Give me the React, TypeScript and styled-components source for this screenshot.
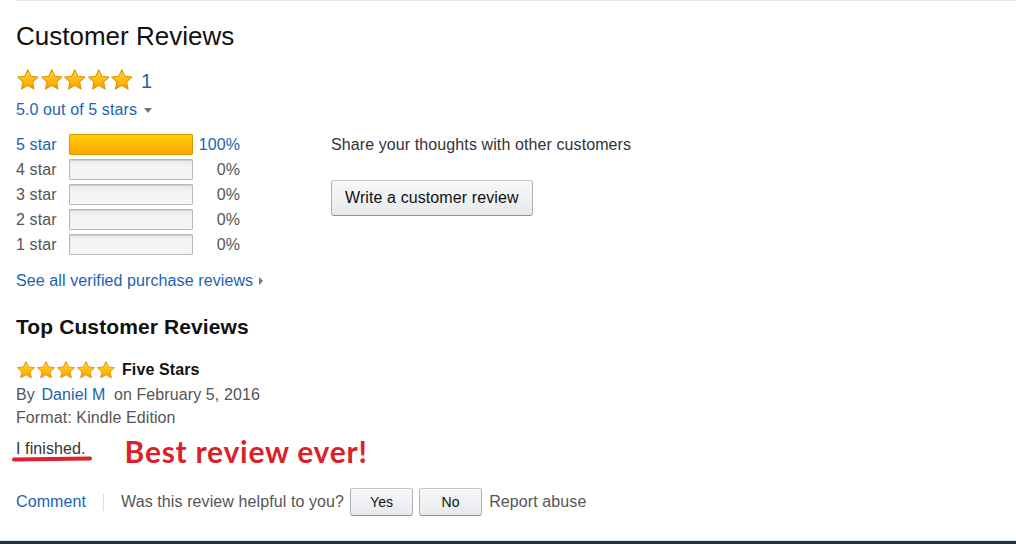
import React, { useId } from "react";
import styled, { createGlobalStyle } from "styled-components";

const Global = createGlobalStyle`
  html, body { margin: 0; padding: 0; background: #fff; }
  body { font-family: Arial, "Liberation Sans", sans-serif; color: #111; }
`;

const LINK = "#1a63b2";

const Page = styled.div`
  height: 544px;
  display: flex;
  flex-direction: column;
  overflow: hidden;
  background: #fff;
`;

const Content = styled.div`
  padding-left: 16px;
  display: flex;
  flex-direction: column;
  align-items: flex-start;
  letter-spacing: 0.1px;
`;

const TopRule = styled.div`
  align-self: stretch;
  height: 1px;
  background: #e7e7e7;
`;

const Heading = styled.h2`
  margin: 19px 0 0;
  font-size: 26px;
  line-height: 32px;
  font-weight: 400;
  letter-spacing: 0;
  color: #111;
`;

const StarsRow = styled.div<{ $mt: number; $h: number }>`
  margin-top: ${(p) => p.$mt}px;
  height: ${(p) => p.$h}px;
  display: flex;
  align-items: center;
`;

const StarSvg = styled.svg<{ $size: number }>`
  width: ${(p) => p.$size}px;
  height: ${(p) => p.$size}px;
  flex: none;
  display: block;
`;

const CountLink = styled.a`
  margin-left: 7px;
  margin-top: 2px;
  font-size: 20px;
  line-height: 24px;
  color: ${LINK};
  text-decoration: none;
`;

const RatingText = styled.div`
  margin-top: 8px;
  font-size: 16px;
  line-height: 20px;
  color: ${LINK};
  display: flex;
  align-items: center;
`;

const CaretDown = styled.span`
  display: inline-block;
  margin-left: 7px;
  width: 0;
  height: 0;
  border-left: 4.5px solid transparent;
  border-right: 4.5px solid transparent;
  border-top: 5px solid #777;
`;

const Summary = styled.div`
  margin-top: 12px;
  display: flex;
  align-items: flex-start;
`;

const Histogram = styled.div`
  width: 224px;
  display: flex;
  flex-direction: column;
`;

const HistRow = styled.div`
  height: 25px;
  display: flex;
  align-items: center;
  font-size: 16px;
`;

const StarLabel = styled.span<{ $active: boolean }>`
  width: 53px;
  color: ${(p) => (p.$active ? LINK : "#555")};
`;

const Bar = styled.div<{ $fill: number }>`
  width: 124px;
  height: 21px;
  box-sizing: border-box;
  border-radius: 1px;
  border: 1px solid ${(p) => (p.$fill > 0 ? "#d39b00" : "#b8b8b8")};
  background: ${(p) =>
    p.$fill > 0
      ? "linear-gradient(to bottom, #ffd000 0%, #ffb600 60%, #ffa600 100%)"
      : "linear-gradient(to bottom, #e9e9e9 0%, #f3f3f3 30%, #f5f5f5 100%)"};
  box-shadow: ${(p) =>
    p.$fill > 0 ? "none" : "inset 0 1px 1px rgba(0,0,0,0.12)"};
`;

const Percent = styled.span<{ $active: boolean }>`
  flex: 1;
  text-align: right;
  color: ${(p) => (p.$active ? LINK : "#555")};
`;

const ShareCol = styled.div`
  margin-left: 91px;
  display: flex;
  flex-direction: column;
  align-items: flex-start;
`;

const ShareText = styled.div`
  font-size: 16px;
  line-height: 25px;
  color: #333;
`;

const Button = styled.button<{ $h: number; $w?: number; $fs: number }>`
  height: ${(p) => p.$h}px;
  ${(p) => (p.$w ? `width: ${p.$w}px;` : "padding: 0 13px;")}
  box-sizing: border-box;
  border: 1px solid #adb1b8;
  border-color: #c3c6cb #adb1b8 #8d9096;
  border-radius: 3px;
  background: linear-gradient(to bottom, #f7f8fa, #e7e9ec);
  box-shadow: inset 0 1px 0 rgba(255, 255, 255, 0.6);
  font-family: Arial, "Liberation Sans", sans-serif;
  font-size: ${(p) => p.$fs}px;
  letter-spacing: 0.1px;
  color: #111;
  cursor: pointer;
`;

const WriteButton = styled(Button)`
  margin-top: 23px;
`;

const SeeAll = styled.a`
  margin-top: 14px;
  font-size: 16px;
  line-height: 20px;
  color: ${LINK};
  text-decoration: none;
  display: flex;
  align-items: center;
`;

const CaretRight = styled.span`
  display: inline-block;
  margin-left: 6px;
  width: 0;
  height: 0;
  border-top: 4px solid transparent;
  border-bottom: 4px solid transparent;
  border-left: 4px solid #777;
`;

const SubHeading = styled.h3`
  margin: 23px 0 0;
  font-size: 21px;
  line-height: 26px;
  font-weight: 700;
  color: #111;
`;

const ReviewTitle = styled.span`
  margin-left: 6px;
  font-size: 16px;
  font-weight: 700;
  color: #111;
`;

const Byline = styled.div<{ $mt: number }>`
  margin-top: ${(p) => p.$mt}px;
  font-size: 16px;
  line-height: 20px;
  color: #555;
`;

const Author = styled.a`
  color: ${LINK};
  text-decoration: none;
  margin: 0 4px 0 2px;
`;

const BodyRow = styled.div`
  margin-top: 11px;
  display: flex;
  align-items: flex-start;
`;

const BodyText = styled.span`
  position: relative;
  font-size: 16px;
  line-height: 20px;
  color: #333;
`;

const Underline = styled.span`
  position: absolute;
  left: -4px;
  top: 18px;
  width: 80px;
  height: 4px;
  border-radius: 2px;
  background: #d9232e;
  transform: rotate(-0.6deg);
`;

const Annotation = styled.span`
  margin: -4px 0 0 39px;
  font-family: Lato, "Open Sans", sans-serif;
  font-weight: 700;
  font-size: 30px;
  line-height: 32px;
  letter-spacing: 0.75px;
  color: #dc1f2c;
`;

const ActionRow = styled.div`
  margin-top: 21px;
  height: 28px;
  display: flex;
  align-items: center;
  font-size: 16px;
  color: #555;
`;

const CommentLink = styled.a`
  color: ${LINK};
  text-decoration: none;
`;

const Divider = styled.span`
  width: 1px;
  height: 17px;
  background: #ddd;
  margin: 0 17px 0 17px;
`;

const Spacer = styled.span<{ $w: number }>`
  width: ${(p) => p.$w}px;
  flex: none;
`;

const Footer = styled.div`
  margin-top: auto;
  height: 3px;
  background: #232f3e;
  border-top: 1px solid #dfe5e5;
`;

function Star({ size }: { size: number }) {
  const id = useId().replace(/:/g, "");
  return (
    <StarSvg $size={size} viewBox="0 0 24 24">
      <defs>
        <linearGradient id={id} x1="0" y1="0" x2="0" y2="1">
          <stop offset="0" stopColor="#ffd93d" />
          <stop offset="0.55" stopColor="#ffbb10" />
          <stop offset="1" stopColor="#f59d00" />
        </linearGradient>
      </defs>
      <polygon
        points="12,1.8 15.1,8.4 22.3,9.2 16.9,14.1 18.4,21.4 12,17.7 5.6,21.4 7.1,14.1 1.7,9.2 8.9,8.4"
        fill={`url(#${id})`}
        stroke="#e39200"
        strokeWidth="1.1"
        strokeLinejoin="round"
      />
    </StarSvg>
  );
}

function Stars({ size }: { size: number }) {
  return (
    <>
      {[0, 1, 2, 3, 4].map((i) => (
        <Star key={i} size={size} />
      ))}
    </>
  );
}

const rows = [
  { label: "5 star", pct: 100 },
  { label: "4 star", pct: 0 },
  { label: "3 star", pct: 0 },
  { label: "2 star", pct: 0 },
  { label: "1 star", pct: 0 },
];

export default function App() {
  return (
    <Page>
      <Global />
      <Content>
        <TopRule />
        <Heading>Customer Reviews</Heading>
        <StarsRow $mt={16} $h={24}>
          <Stars size={23.6} />
          <CountLink href="#">1</CountLink>
        </StarsRow>
        <RatingText>
          5.0 out of 5 stars
          <CaretDown />
        </RatingText>
        <Summary>
          <Histogram>
            {rows.map((r) => (
              <HistRow key={r.label}>
                <StarLabel $active={r.pct > 0}>{r.label}</StarLabel>
                <Bar $fill={r.pct} />
                <Percent $active={r.pct > 0}>{r.pct}%</Percent>
              </HistRow>
            ))}
          </Histogram>
          <ShareCol>
            <ShareText>Share your thoughts with other customers</ShareText>
            <WriteButton $h={36} $fs={16}>
              Write a customer review
            </WriteButton>
          </ShareCol>
        </Summary>
        <SeeAll href="#">
          See all verified purchase reviews
          <CaretRight />
        </SeeAll>
        <SubHeading>Top Customer Reviews</SubHeading>
        <StarsRow $mt={20} $h={20}>
          <Stars size={20} />
          <ReviewTitle>Five Stars</ReviewTitle>
        </StarsRow>
        <Byline $mt={5}>
          By <Author href="#">Daniel M</Author> on February 5, 2016
        </Byline>
        <Byline $mt={3}>Format: Kindle Edition</Byline>
        <BodyRow>
          <BodyText>
            I finished.
            <Underline />
          </BodyText>
          <Annotation>Best review ever!</Annotation>
        </BodyRow>
        <ActionRow>
          <CommentLink href="#">Comment</CommentLink>
          <Divider />
          <span>Was this review helpful to you?</span>
          <Spacer $w={6} />
          <Button $h={28} $w={63} $fs={14}>
            Yes
          </Button>
          <Spacer $w={6} />
          <Button $h={28} $w={63} $fs={14}>
            No
          </Button>
          <Spacer $w={7} />
          <span>Report abuse</span>
        </ActionRow>
      </Content>
      <Footer />
    </Page>
  );
}
